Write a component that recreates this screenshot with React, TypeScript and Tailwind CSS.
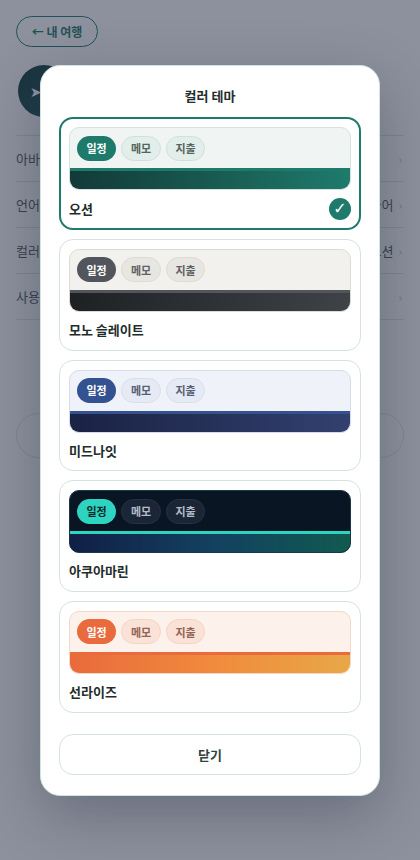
const themes = [
  {
    name: "오션",
    selected: true,
    border: "border-[#d5e2df]",
    bg: "bg-[#f0f5f3]",
    active: "bg-[#1e7b6c] text-white",
    chip: "bg-[#e2eeea] border-[#d1e0db] text-[#55645f]",
    bar: "border-[#1e7b6c] bg-gradient-to-r from-[#123a38] to-[#1e7b6c]",
  },
  {
    name: "모노 슬레이트",
    border: "border-[#dcdcd6]",
    bg: "bg-[#f2f1ee]",
    active: "bg-[#52565c] text-white",
    chip: "bg-[#e8e6e1] border-[#dddbd5] text-[#5e6165]",
    bar: "border-[#52565c] bg-gradient-to-r from-[#1e2124] to-[#3f4348]",
  },
  {
    name: "미드나잇",
    border: "border-[#d5dbe9]",
    bg: "bg-[#f0f2f9]",
    active: "bg-[#33528f] text-white",
    chip: "bg-[#e6eaf4] border-[#d9deec] text-[#575f74]",
    bar: "border-[#33528f] bg-gradient-to-r from-[#1a2344] to-[#33406f]",
  },
  {
    name: "아쿠아마린",
    border: "border-[#173a48]",
    bg: "bg-[#0a1524]",
    active: "bg-[#2dd4bf] text-[#0a2a2a]",
    chip: "bg-[#1a2535] border-[#263144] text-[#b4bcc8]",
    bar: "border-[#2dd4bf] bg-gradient-to-r from-[#101f45] via-[#134060] to-[#125a50]",
  },
  {
    name: "선라이즈",
    border: "border-[#f3d8ca]",
    bg: "bg-[#fdf1eb]",
    active: "bg-[#e96a3c] text-white",
    chip: "bg-[#fae2d6] border-[#f2d5c6] text-[#93635a]",
    bar: "border-[#e96a3c] bg-gradient-to-r from-[#e96a3c] via-[#f08a3c] to-[#e8a748]",
  },
];

const rows = [
  { label: "아바타", value: "" },
  { label: "언어", value: "한국어" },
  { label: "컬러 테마", value: "오션" },
  { label: "사용 안내", value: "" },
];

function ThemeCard({ theme }: { theme: (typeof themes)[number] }) {
  return (
    <div
      className={`rounded-[14px] bg-white ${
        theme.selected ? "border-2 border-[#1e7b6c] p-[8px]" : "border border-[#d5e2df] p-[9px]"
      }`}
    >
      <div className={`overflow-hidden rounded-[10px] border ${theme.border} ${theme.bg}`}>
        <div className="flex h-[40px] items-center gap-[5px] px-[7px]">
          <span className={`flex h-[25px] w-[39px] items-center justify-center rounded-full text-[11px] font-bold ${theme.active}`}>일정</span>
          <span className={`flex h-[25px] w-[40px] items-center justify-center rounded-full border text-[11px] font-semibold ${theme.chip}`}>메모</span>
          <span className={`flex h-[25px] w-[39px] items-center justify-center rounded-full border text-[11px] font-semibold ${theme.chip}`}>지출</span>
        </div>
        <div className={`h-[21px] border-t-[3px] ${theme.bar}`} />
      </div>
      <div className={`flex h-[21.67px] items-center justify-between ${theme.selected ? "mt-[8px]" : "mt-[7px]"}`}>
        <span className="text-[13px] font-bold text-[#1f2d2b]">{theme.name}</span>
        {theme.selected && (
          <span className="flex size-[22px] items-center justify-center rounded-full bg-[#1e7b6c] font-['DejaVu_Sans',sans-serif] text-[16px] leading-none text-white">
            ✓
          </span>
        )}
      </div>
    </div>
  );
}

export default function App() {
  return (
    <div className="relative h-[860px] w-[420px] overflow-hidden bg-[#f7f9f8] font-['Noto_Sans_CJK_KR','Noto_Sans',sans-serif]">
      <div className="px-4 pt-4">
        <button className="flex h-[31px] w-[82px] items-center justify-center rounded-full border border-[#1e7b6c] text-[12px] font-semibold text-[#1e7b6c]">
          ← 내 여행
        </button>
        <div className="mt-[18px] flex pl-[2px]">
          <div className="flex size-[52px] items-center justify-center rounded-full bg-gradient-to-br from-[#123a38] to-[#1e5c5c] pr-[16px] text-[14px] text-white">➤</div>
        </div>
        <div className="mt-[18px] border-t border-[#d5e2df]">
          {rows.map((row) => (
            <div key={row.label} className="flex h-[46px] items-center justify-between border-b border-[#d5e2df] pr-[2px] text-[13px] text-[#4a5a56]">
              <span>{row.label}</span>
              <span className="flex items-center gap-[5px]">
                {row.value}
                <span className="text-[12px] text-[#b4c0bd]">›</span>
              </span>
            </div>
          ))}
        </div>
        <div className="mt-[93px] h-[45px] rounded-full border border-[#d5e2df]" />
      </div>

      <div className="absolute inset-0 flex items-start justify-center bg-[#232a42]/50 pt-[65px]">
        <div className="flex w-[340px] flex-col rounded-[20px] border border-[#d5e2df] bg-white px-[18px] pb-[20px] pt-[20px] shadow-[0_20px_60px_rgba(20,30,50,0.3)]">
          <h2 className="mb-[11.33px] text-center text-[13px] leading-[20px] font-bold text-[#1f2d2b]">컬러 테마</h2>
          <div className="flex flex-col gap-[9px]">
            {themes.map((t) => (
              <ThemeCard key={t.name} theme={t} />
            ))}
          </div>
          <button className="mt-[21.6px] h-[40.5px] rounded-[14px] border border-[#d5e2df] text-[13px] font-bold text-[#33423f]">닫기</button>
        </div>
      </div>
    </div>
  );
}
